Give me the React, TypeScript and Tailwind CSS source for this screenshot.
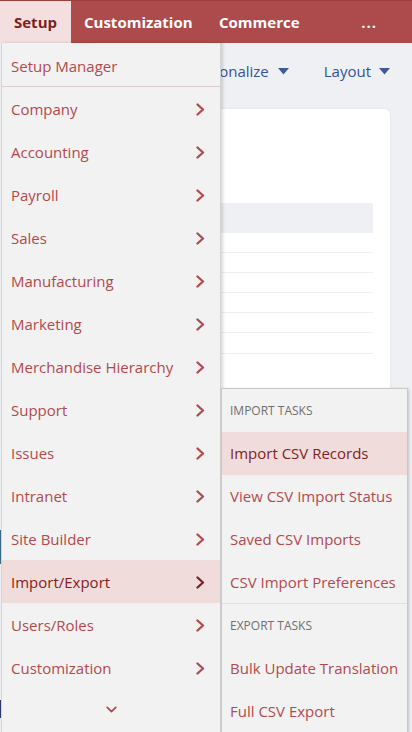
import { ChevronDown } from "lucide-react";

const menuItems = [
    "Company",
    "Accounting",
    "Payroll",
    "Sales",
    "Manufacturing",
    "Marketing",
    "Merchandise Hierarchy",
    "Support",
    "Issues",
    "Intranet",
    "Site Builder",
    "Import/Export",
    "Users/Roles",
    "Customization",
];

function Chevron({ dark }: { dark?: boolean }) {
    return (
        <svg width="9" height="13" viewBox="0 0 9 13" fill="none">
            <path
                d="M1.5 1.5 L7 6.5 L1.5 11.5"
                stroke={dark ? "#7f1f22" : "#b24a4d"}
                strokeWidth="2.3"
                strokeLinecap="round"
                strokeLinejoin="round"
            />
        </svg>
    );
}

function Caret() {
    return (
        <svg width="11" height="7" viewBox="0 0 11 7">
            <path d="M0 0 L11 0 L5.5 6.5 Z" fill="#3d5a99" />
        </svg>
    );
}

export default function App() {
    const font = { fontFamily: '"Open Sans", "Noto Sans", sans-serif' };

    return (
        <div className="relative w-[412px] h-[732px] overflow-hidden bg-[#eff0f4] whitespace-nowrap" style={font}>
            {/* top navigation */}
            <div className="flex h-[43px] bg-[#ad4a4b] border-t border-[#9c3d3e] text-white font-bold text-[15px]">
                <div className="w-[71px] flex items-center justify-center bg-[#f3dfdf] text-[#7c1f21] pt-[1px]">Setup</div>
                <div className="flex items-center pl-[13px] w-[148px] pt-[1px]">Customization</div>
                <div className="flex items-center pt-[1px]">Commerce</div>
                <div className="flex-1 flex items-center justify-end pr-[35px] tracking-[1px]">...</div>
            </div>

            {/* page behind the menu */}
            <div className="flex">
                <div className="w-[2px] flex flex-col">
                    <div className="h-[487px]" />
                    <div className="h-[34px] bg-[#3b6a8c]" />
                    <div className="h-[136px]" />
                    <div className="h-[18px] bg-[#2c3d6b]" />
                </div>
                <div className="flex-1 flex flex-col items-end pr-[22px]">
                    <div className="flex items-center gap-[35px] h-[56px] text-[15px] text-[#34539a] pt-[1px]">
                        <div className="flex items-center gap-[9px]">
                            <span>Personalize</span>
                            <Caret />
                        </div>
                        <div className="flex items-center gap-[8px]">
                            <span>Layout</span>
                            <Caret />
                        </div>
                    </div>
                    <div className="mt-[10px] w-[300px] h-[320px] bg-white rounded-[6px] shadow-[0_0_3px_rgba(0,0,0,0.06)] pr-[17px] pt-[94px]">
                        <div className="h-[30px] bg-[#eff0f4]" />
                        <div className="h-[20px] border-b border-[#eeeff2]" />
                        <div className="h-[20px] border-b border-[#eeeff2]" />
                        <div className="h-[20px] border-b border-[#eeeff2]" />
                        <div className="h-[20px] border-b border-[#eeeff2]" />
                        <div className="h-[20px] border-b border-[#eeeff2]" />
                        <div className="h-[21px] border-b border-[#eeeff2]" />
                    </div>
                </div>
            </div>

            {/* Setup dropdown */}
            <div className="absolute left-[1px] top-[43px] w-[220px] bg-[#f2f2f2] border-l border-r border-[#d4d4d4] shadow-[2px_0_3px_rgba(0,0,0,0.15)] text-[15px] text-[#b24a4d]">
                <div className="h-[44px] flex items-center pl-[9px] pt-[3px] border-b border-[#dcc9c9]">Setup Manager</div>
                {menuItems.map((item) => {
                    const active = item === "Import/Export";
                    return (
                        <div
                            key={item}
                            className={
                                active
                                    ? "h-[43px] flex items-center justify-between pl-[9px] pr-[15px] pt-[1px] bg-[#f1dcdc] text-[#801f22]"
                                    : "h-[43px] flex items-center justify-between pl-[9px] pr-[15px] pt-[1px]"
                            }
                        >
                            <span>{item}</span>
                            <Chevron dark={active} />
                        </div>
                    );
                })}
                <div className="h-[43px] flex items-center justify-center pb-[2px]">
                    <ChevronDown size={17} strokeWidth={2.6} color="#b24a4d" />
                </div>
            </div>

            {/* Import/Export submenu */}
            <div className="absolute left-[221px] top-[388px] w-[187px] bg-[#f2f2f2] border border-[#c9c9c9] shadow-[1px_1px_3px_rgba(0,0,0,0.18)] text-[15px] text-[#b24a4d]">
                <div className="h-[43px] flex items-center pl-[8px] text-[12px] text-[#6f6f6f]">IMPORT TASKS</div>
                <div className="h-[43px] flex items-center pl-[8px] bg-[#f1dcdc] text-[#801f22]">Import CSV Records</div>
                <div className="h-[43px] flex items-center pl-[8px]">View CSV Import Status</div>
                <div className="h-[43px] flex items-center pl-[8px]">Saved CSV Imports</div>
                <div className="h-[43px] flex items-center pl-[8px] border-b border-[#e0e0e0]">CSV Import Preferences</div>
                <div className="h-[43px] flex items-center pl-[8px] text-[12px] text-[#6f6f6f]">EXPORT TASKS</div>
                <div className="h-[43px] flex items-center pl-[8px]">Bulk Update Translation</div>
                <div className="h-[43px] flex items-center pl-[8px]">Full CSV Export</div>
            </div>
        </div>
    );
}
